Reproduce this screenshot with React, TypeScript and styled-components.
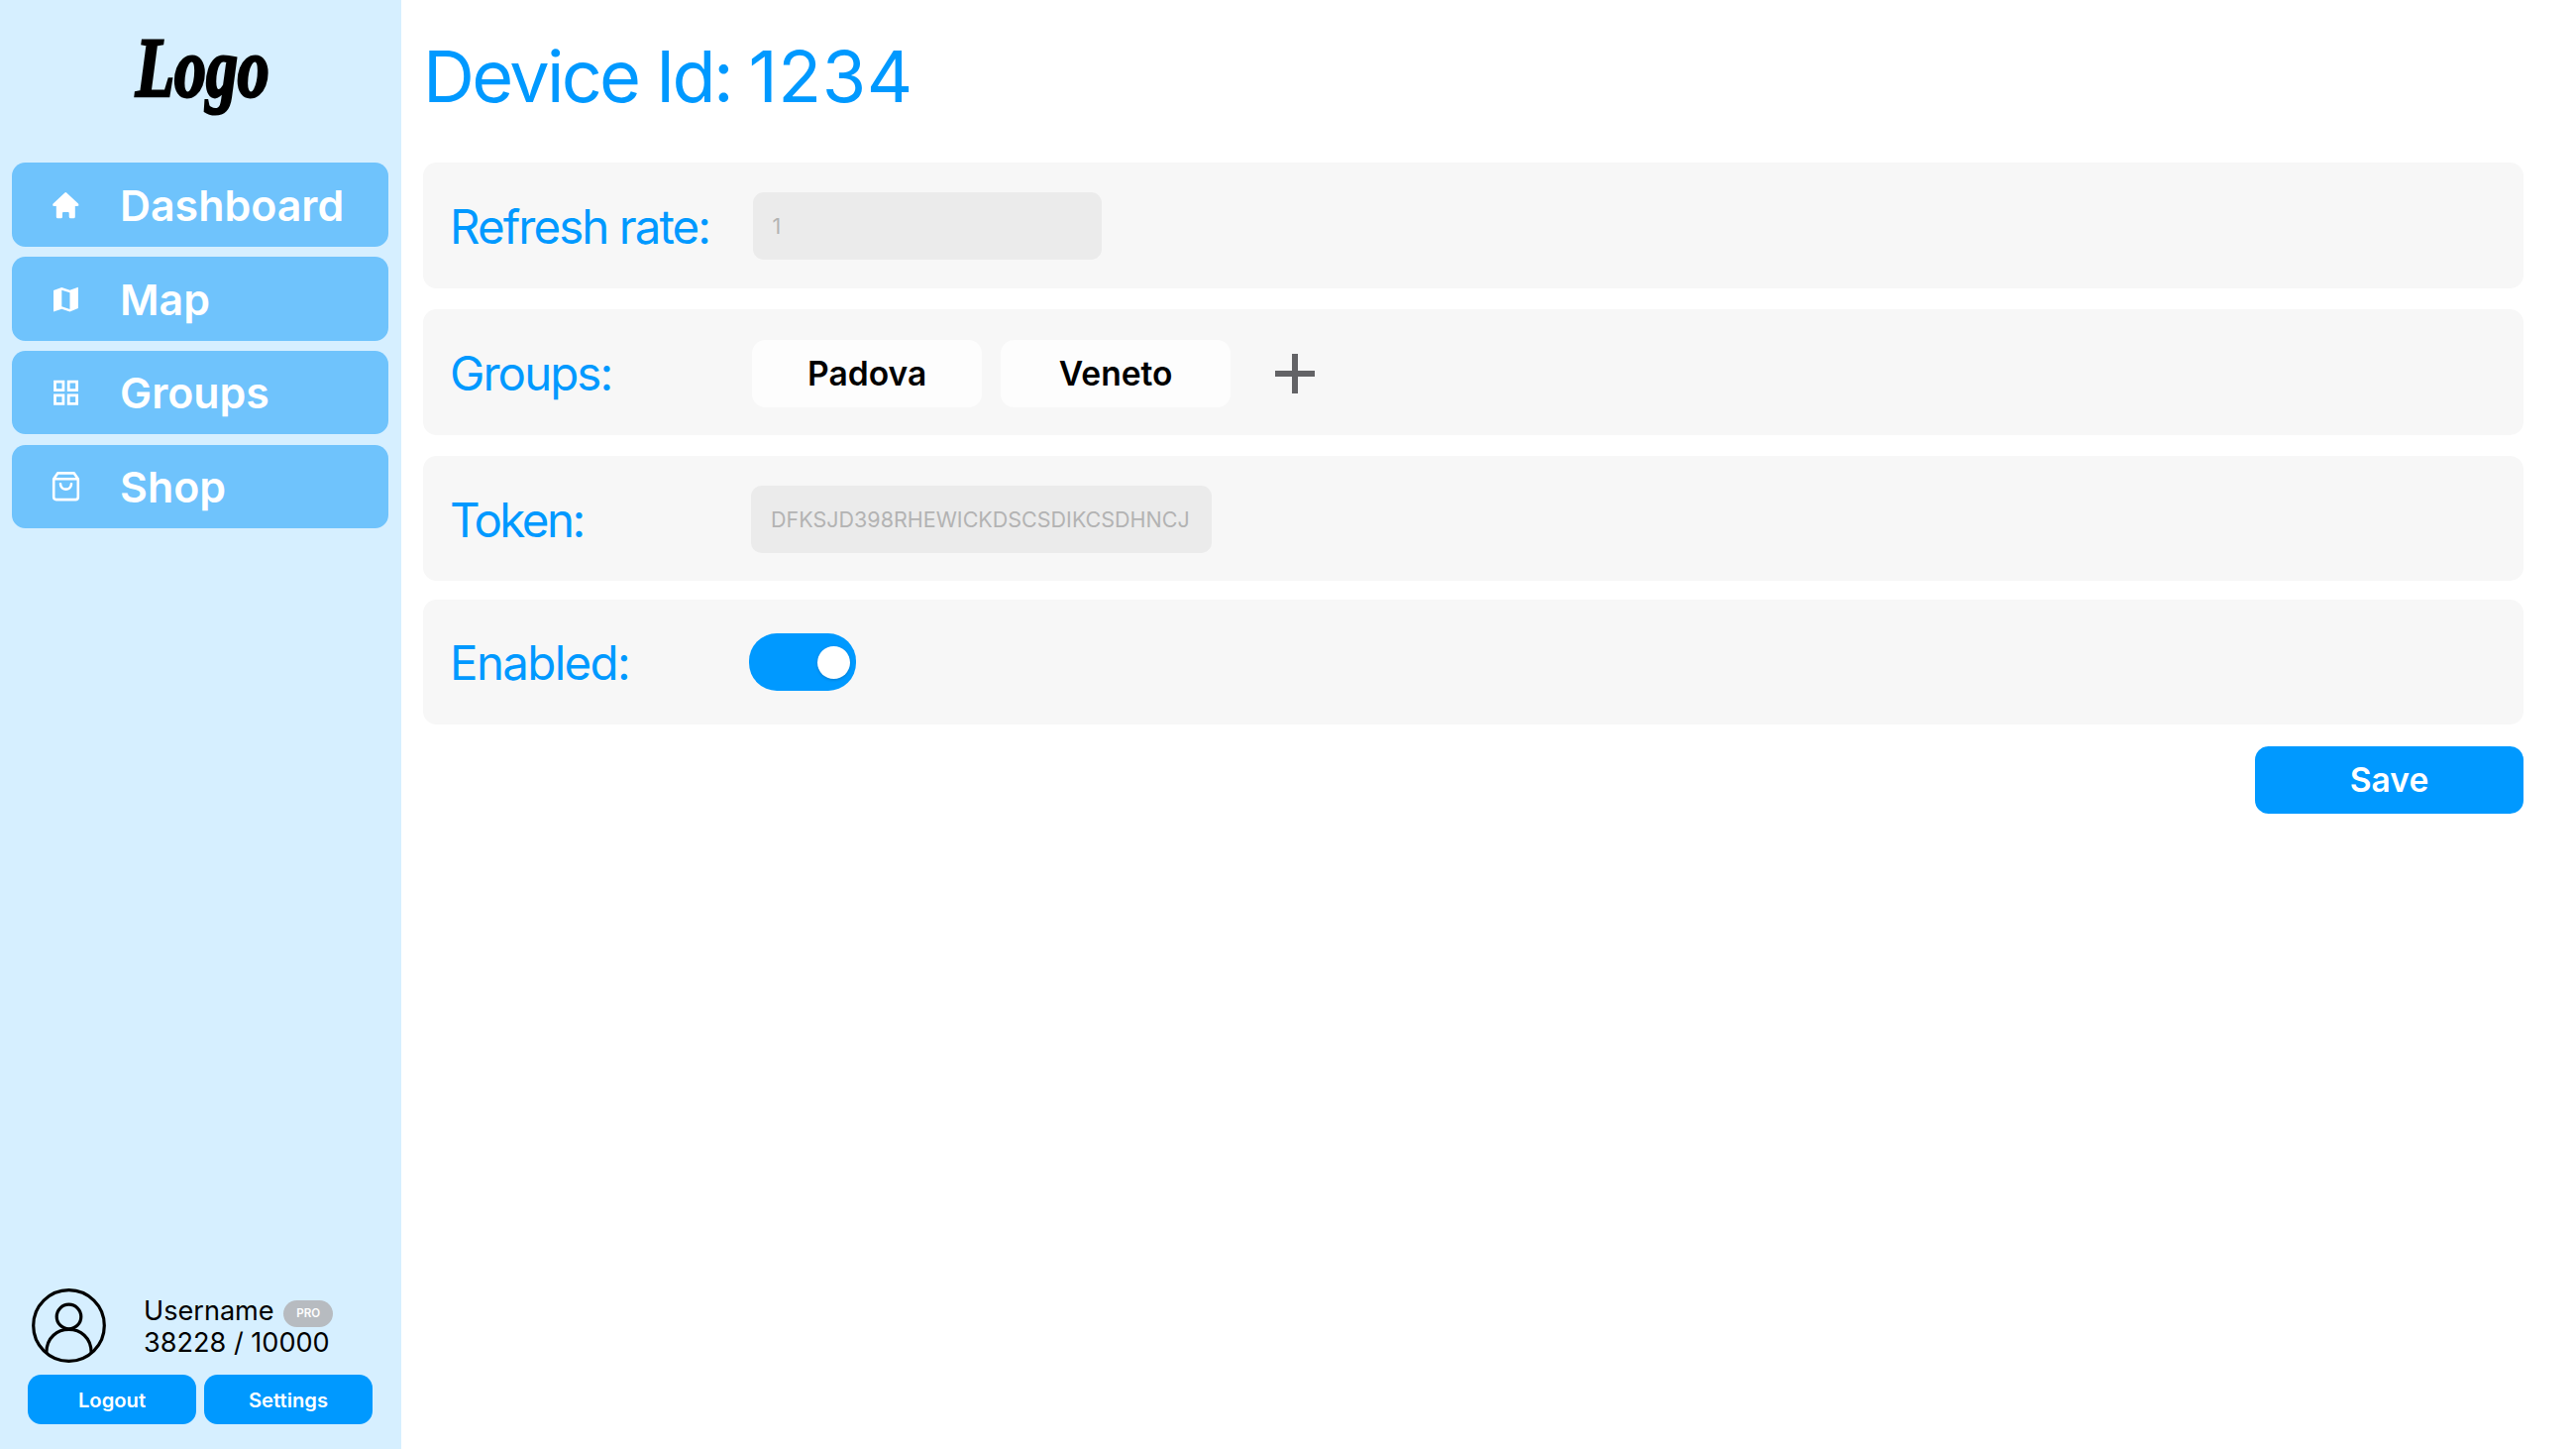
import React from "react";
import styled, { createGlobalStyle } from "styled-components";

const Global = createGlobalStyle`
  *, *::before, *::after { box-sizing: border-box; }
  body { margin: 0; background: #fff; font-family: Inter, "Liberation Sans", sans-serif; }
  button, input { font-family: inherit; border: 0; margin: 0; padding: 0; }
`;

const Page = styled.div`
  display: flex;
  width: 2600px;
  height: 1462px;
  overflow: hidden;
`;

const Sidebar = styled.aside`
  display: flex;
  flex-direction: column;
  width: 405px;
  flex: none;
  padding: 21px 13px 24.7px 12px;
  background: #d6efff;
`;

const Logo = styled.div`
  height: 96px;
  margin: 0 0 47.2px 125px;
  transform: scaleX(0.76);
  transform-origin: 0 0;
  color: #000;
  font-family: "Liberation Serif", serif;
  font-size: 84px;
  font-style: italic;
  font-weight: 700;
  line-height: 96px;
  -webkit-text-stroke: 3px #000;
`;

const Nav = styled.nav`
  display: flex;
  flex-direction: column;
  gap: 10.4px;
`;

const NavButton = styled.button`
  display: flex;
  align-items: center;
  height: 84.5px;
  padding: 0.5px 0 0 38px;
  border-radius: 13.5px;
  background: #6fc3fc;
  color: #fff;
  font-size: 42.9px;
  font-weight: 600;
  text-align: left;
`;

const NavIcon = styled.svg`
  width: 32px;
  height: 32px;
  flex: none;
  margin-right: 39px;
`;

const Account = styled.div`
  display: flex;
  align-items: center;
  margin: auto 0 12px 20px;
`;

const Avatar = styled.svg`
  width: 75px;
  height: 75px;
  margin-right: 38px;
`;

const AccountText = styled.div`
  padding-top: 2.5px;
  font-size: 27.1px;
  line-height: 32px;
  color: #000;
`;

const NameLine = styled.div`
  display: flex;
  align-items: center;
`;

const Badge = styled.span`
  display: flex;
  align-items: center;
  justify-content: center;
  width: 50px;
  height: 27px;
  margin: 4px 0 0 9.5px;
  border-radius: 14px;
  background: #b7bbc0;
  color: #fff;
  font-size: 11.6px;
  font-weight: 600;
`;

const AccountActions = styled.div`
  display: flex;
  gap: 8px;
  margin-left: 16px;
`;

const PrimaryButton = styled.button<{ $w: number; $h: number; $size: number }>`
  width: ${(p) => p.$w}px;
  height: ${(p) => p.$h}px;
  border-radius: 13.5px;
  background: #0099ff;
  color: #fff;
  font-size: ${(p) => p.$size}px;
  font-weight: 600;
`;

const Main = styled.main`
  display: flex;
  flex-direction: column;
  flex: 1;
  padding: 33px 53px 0 22px;
`;

const Title = styled.h1`
  margin: 0 0 43.2px;
  color: #0099ff;
  font-size: 72px;
  font-weight: 400;
  letter-spacing: -2.7px;
  line-height: 88px;
  white-space: nowrap;
`;

const DeviceNumber = styled.span`
  letter-spacing: 0.5px;
`;

const Row = styled.section<{ $gap: number; $drop?: number }>`
  display: flex;
  align-items: center;
  height: 126.4px;
  margin-bottom: ${(p) => p.$gap}px;
  padding: ${(p) => p.$drop ?? 0}px 0 0 27px;
  border-radius: 13.5px;
  background: #f7f7f7;
`;

const Label = styled.label<{ $w: number; $track: number; $lift?: number }>`
  width: ${(p) => p.$w}px;
  padding: 1px 0 ${(p) => p.$lift ?? 0}px;
  color: #0099ff;
  font-size: 47.4px;
  letter-spacing: ${(p) => p.$track}px;
  white-space: nowrap;
`;

const Field = styled.input<{ $w: number }>`
  width: ${(p) => p.$w}px;
  height: 68px;
  padding: 0 20px !important;
  border-radius: 10.8px;
  background: #ebebeb;
  color: #b3b3b3;
  font-size: 21.5px;
`;

const Chip = styled.button`
  width: 232px;
  height: 68px;
  margin-right: 19px !important;
  border-radius: 13.5px;
  background: #fdfdfd;
  color: #000;
  font-size: 33.6px;
  font-weight: 600;
`;

const PlusIcon = styled.svg`
  width: 40px;
  height: 40px;
  margin-left: 26px;
`;

const Toggle = styled.div`
  display: flex;
  align-items: center;
  justify-content: flex-end;
  width: 107.5px;
  height: 58.5px;
  padding-right: 5.5px;
  border-radius: 28px;
  background: #0099ff;
`;

const Knob = styled.span`
  width: 33px;
  height: 33px;
  border-radius: 50%;
  background: #fff;
  box-shadow: 0 1px 3px rgba(0, 0, 0, 0.2);
`;

const Footer = styled.div`
  display: flex;
  justify-content: flex-end;
`;

const HomeIcon = () => (
  <NavIcon viewBox="0 0 32 32" fill="#fff">
    <path d="M15.4 3.4Q16.3 2.7 17.2 3.4L29 14.5Q30.3 17 27.7 17H25.8V27.8Q25.8 29.3 24.3 29.3H21.2Q19.7 29.3 19.7 27.8V24Q19.7 23 18.7 23H14Q13 23 13 24V27.8Q13 29.3 11.5 29.3H8.3Q6.8 29.3 6.8 27.8V17H4.9Q2.3 17 3.6 14.5Z" />
  </NavIcon>
);
const MapIcon = () => (
  <NavIcon viewBox="0 0 32 32" fill="#fff" fillRule="evenodd">
    <path d="M4 7L12.3 4L20.5 6.7L28.9 3.7V25L20.5 28.4L12.3 25.7L4 28.4ZM12.3 6.7V23.3L20.5 26V9.3Z" />
  </NavIcon>
);
const GridIcon = () => (
  <NavIcon viewBox="0 0 32 32" fill="none" stroke="#fff" strokeWidth="2.8">
    <path d="M5.5 5.2h8.4v8.4H5.5zM19.2 5.2h8.4v8.4H19.2zM5.5 18.9h8.4v8.4H5.5zM19.2 18.9h8.4v8.4H19.2z" />
  </NavIcon>
);
const BagIcon = () => (
  <NavIcon viewBox="0 0 32 32" fill="none" stroke="#fff" strokeWidth="2.6" strokeLinecap="round" strokeLinejoin="round">
    <path d="M4.2 8.2L8.2 2.4H24.8L28.8 8.2V26.5Q28.8 29.1 26.2 29.1H6.8Q4.2 29.1 4.2 26.5ZM4.2 8.2H28.8M11 13.2C11.2 20.4 21.8 20.4 22 13.2" />
  </NavIcon>
);

const items = [
  { label: "Dashboard", Icon: HomeIcon },
  { label: "Map", Icon: MapIcon },
  { label: "Groups", Icon: GridIcon },
  { label: "Shop", Icon: BagIcon },
];

export default function App() {
  return (
    <>
      <Global />
      <Page>
        <Sidebar>
          <Logo>Logo</Logo>
          <Nav>
            {items.map(({ label, Icon }) => (
              <NavButton key={label}>
                <Icon />
                {label}
              </NavButton>
            ))}
          </Nav>
          <Account>
            <Avatar viewBox="0 0 75 75" fill="none" stroke="#000" strokeWidth="3.2">
              <circle cx="37.5" cy="37.5" r="35.8" />
              <circle cx="37.5" cy="28.5" r="12.3" />
              <path d="M14.8 65C15 33.5 60 33.5 60.2 65" />
            </Avatar>
            <AccountText>
              <NameLine>
                Username<Badge>PRO</Badge>
              </NameLine>
              <div>38228 / 10000</div>
            </AccountText>
          </Account>
          <AccountActions>
            <PrimaryButton $w={170} $h={50} $size={20.2}>Logout</PrimaryButton>
            <PrimaryButton $w={170} $h={50} $size={20.2}>Settings</PrimaryButton>
          </AccountActions>
        </Sidebar>
        <Main>
          <Title>
            Device Id: <DeviceNumber>1234</DeviceNumber>
          </Title>
          <Row $gap={21.8} $drop={1.5}>
            <Label $w={305.5} $track={-1.9}>Refresh rate:</Label>
            <Field $w={352} defaultValue="1" />
          </Row>
          <Row $gap={21.2} $drop={2.5}>
            <Label $w={305.2} $track={-1.9} $lift={2}>Groups:</Label>
            <Chip>Padova</Chip>
            <Chip>Veneto</Chip>
            <PlusIcon viewBox="0 0 40 40" stroke="#636366" strokeWidth="6">
              <path d="M0 20H40M20 0V40" />
            </PlusIcon>
          </Row>
          <Row $gap={18.6} $drop={1.5}>
            <Label $w={304} $track={-2.5}>Token:</Label>
            <Field $w={465} defaultValue="DFKSJD398RHEWICKDSCSDIKCSDHNCJ" />
          </Row>
          <Row $gap={21.5}>
            <Label $w={302} $track={-1.6}>Enabled:</Label>
            <Toggle>
              <Knob />
            </Toggle>
          </Row>
          <Footer>
            <PrimaryButton $w={271} $h={68} $size={33.6}>Save</PrimaryButton>
          </Footer>
        </Main>
      </Page>
    </>
  );
}
